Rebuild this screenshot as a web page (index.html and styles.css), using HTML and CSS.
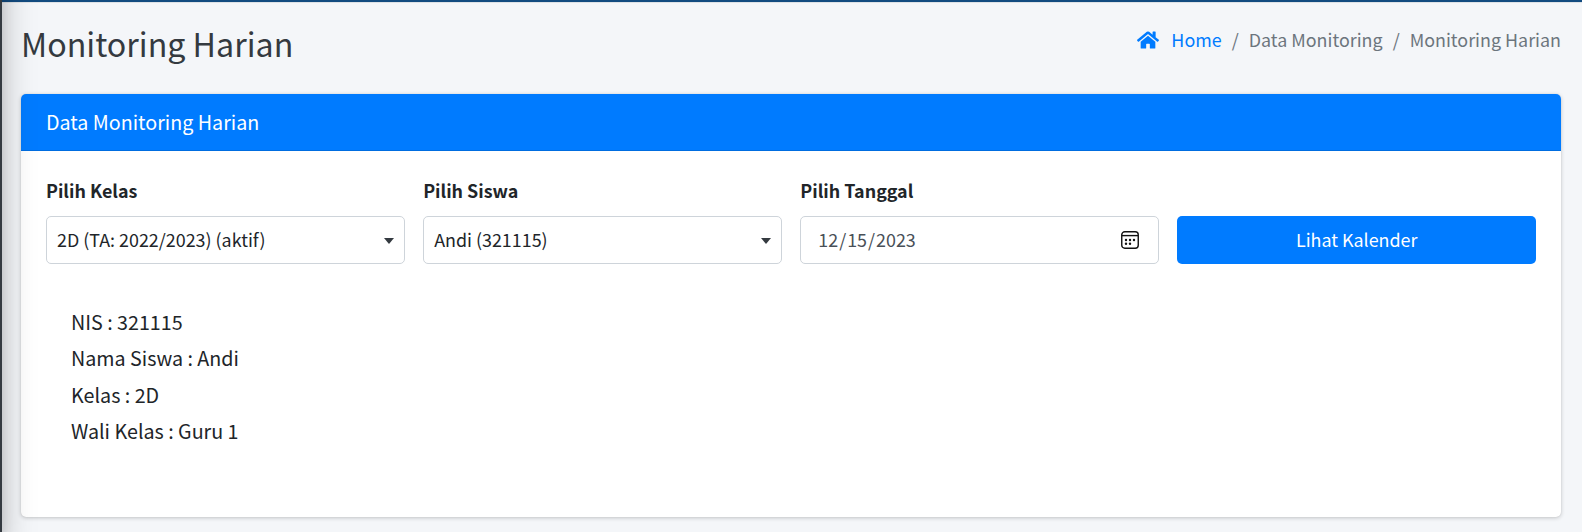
FILE: index.html
```html
<!DOCTYPE html>
<html lang="id">
<head>
<meta charset="utf-8">
<title>Monitoring Harian</title>
<link rel="stylesheet" href="styles.css">
</head>
<body>
<aside class="sidebar"></aside>
<main class="content">
  <header class="page-header">
    <h1 class="page-title">Monitoring Harian</h1>
    <nav class="breadcrumb">
      <svg class="home-icon" viewBox="0 0 576 512"><path fill="currentColor" d="M280.37 148.26L96 300.11V464a16 16 0 0 0 16 16l112.06-.29a16 16 0 0 0 15.92-16V368a16 16 0 0 1 16-16h64a16 16 0 0 1 16 16v95.64a16 16 0 0 0 16 16.05L464 480a16 16 0 0 0 16-16V300L295.67 148.26a12.19 12.19 0 0 0-15.3 0zM571.6 251.47L488 182.56V44.05a12 12 0 0 0-12-12h-56a12 12 0 0 0-12 12v72.61L318.47 43a48 48 0 0 0-61 0L4.34 251.47a12 12 0 0 0-1.6 16.9l25.5 31A12 12 0 0 0 45.15 301l235.22-193.74a12.19 12.19 0 0 1 15.3 0L530.9 301a12 12 0 0 0 16.9-1.6l25.5-31a12 12 0 0 0-1.7-16.93z"/></svg>
      <a class="crumb-link">Home</a>
      <span class="crumb-sep">/</span>
      <span class="crumb">Data Monitoring</span>
      <span class="crumb-sep">/</span>
      <span class="crumb">Monitoring Harian</span>
    </nav>
  </header>
  <section class="card">
    <div class="card-header">Data Monitoring Harian</div>
    <div class="card-body">
      <div class="filters">
        <div class="field"><span class="label">Pilih Kelas</span><div class="control"><span>2D (TA: 2022/2023) (aktif)</span><i class="caret"></i></div></div>
        <div class="field"><span class="label">Pilih Siswa</span><div class="control"><span>Andi (321115)</span><i class="caret"></i></div></div>
        <div class="field"><span class="label">Pilih Tanggal</span><div class="control control-date"><span>12<span class="slash">/</span>15<span class="slash">/</span>2023</span>
          <svg class="calendar-icon" viewBox="0 0 18 18"><rect x=".75" y=".75" width="16.5" height="16.5" rx="3" fill="none" stroke="#111" stroke-width="1.4"/><path d="M1 4.6h16" stroke="#111" stroke-width="1.4"/><g fill="#111"><circle cx="5" cy="9" r="1.2"/><circle cx="9" cy="9" r="1.2"/><circle cx="13" cy="9" r="1.2"/><circle cx="5" cy="12.8" r="1.2"/><circle cx="9" cy="12.8" r="1.2"/></g></svg></div></div>
        <button class="button">Lihat Kalender</button>
      </div>
      <div class="details">
        <div>NIS : 321115</div>
        <div>Nama Siswa : Andi</div>
        <div>Kelas : 2D</div>
        <div>Wali Kelas : Guru 1</div>
      </div>
    </div>
  </section>
</main>
</body>
</html>
```
FILE: styles.css
```css
* { box-sizing: border-box; }
body { position: relative; margin: 0; height: 532px; overflow: hidden; background: #f4f6f9; color: #212529; font-family: "Noto Sans CJK SC", sans-serif; font-size: 17.9px; line-height: 30px; }
/* The sidebar is scrolled off to the left; its edge and shadow overlap the content. */
.sidebar { position: absolute; z-index: 1; top: -80px; bottom: 0; left: -310px; width: 312px; background: #343a40; box-shadow: 0 17px 32px rgba(0,0,0,.25), 0 12px 12px rgba(0,0,0,.1); pointer-events: none; }
.content { height: 532px; border-top: 2px solid #124b80; padding: 0 21px; box-shadow: inset 0 1px 0 #dee2e6; }
.page-header { display: flex; justify-content: space-between; height: 92px; }
.page-title { margin: 15px 0 0; font-size: 32.2px; line-height: 52px; font-weight: 400; color: #343a40; }
.breadcrumb { display: flex; margin-top: 22px; color: #6c757d; }
.home-icon { width: 22px; height: 20px; margin: 5.5px 12px 0 0; color: #007bff; }
.crumb-link { color: #007bff; }
.crumb-sep { margin: 0 10px; }
.card { height: 423px; background: #fff; border-radius: 5px; box-shadow: 0 0 1px rgba(0,0,0,.13), 0 1px 4px rgba(0,0,0,.2); }
.card-header { height: 57px; padding: 0 25px; border-bottom: 1px solid #006de0; border-radius: 5px 5px 0 0; background: #007bff; color: #fff; font-size: 19.7px; line-height: 56px; }
.card-body { padding: 24px 25px; }
.filters { display: grid; grid-template-columns: repeat(4, 1fr); gap: 18.6px; align-items: end; }
.label { display: block; margin-bottom: 11px; font-weight: 700; }
.control { display: flex; align-items: center; justify-content: space-between; height: 48px; padding: 0 10px 2px; border: 1px solid #ced4da; border-radius: 5px; }
.control-date { padding: 0 19px 2px 17px; color: #495057; }
.slash { margin: 0 1px; }
.caret { margin-top: 3px; border: 5px solid transparent; border-top: 6px solid #343a40; border-bottom: 0; }
.calendar-icon { width: 18px; height: 18px; margin-top: 2px; }
.button { height: 48px; padding: 0 0 2px; border: 0; border-radius: 5px; background: #007bff; color: #fff; font: inherit; }
.details { padding: 40px 25px 0; font-size: 19.7px; line-height: 36.4px; }
```
